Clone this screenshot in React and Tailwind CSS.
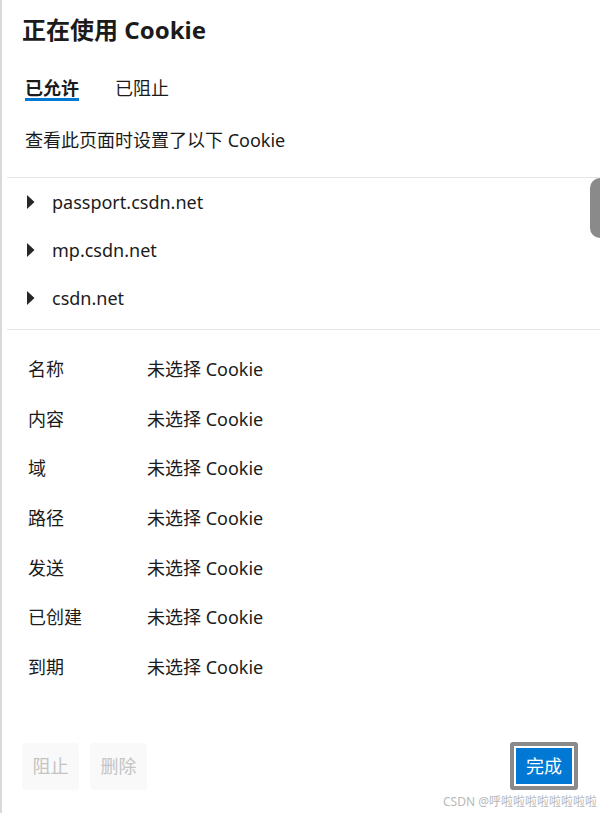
import React from 'react';

const domains = ['passport.csdn.net', 'mp.csdn.net', 'csdn.net'];
const fields = ['名称', '内容', '域', '路径', '发送', '已创建', '到期'];

export default function App() {
  return (
    <div
      className="flex w-[600px] h-[813px] bg-[#e6e6e6] overflow-hidden text-[#1b1b1b]"
      style={{ fontFamily: '"Segoe UI", "Noto Sans", "Noto Sans CJK SC", sans-serif' }}
    >
      <div className="w-[2px] shrink-0 bg-[#d9d9d9]" />
      <div className="relative flex flex-1 flex-col bg-white">
        <h1 className="pl-[20px] pt-[14px] text-[24px] font-bold leading-[32px]">正在使用 Cookie</h1>

        <div className="flex gap-[36px] pl-[23px] pt-[32px]">
          <div className="flex flex-col">
            <span className="text-[18px] font-bold leading-[20px]">已允许</span>
            <span className="mt-[0px] h-[3px] w-[54px] bg-[#0078d4]" />
          </div>
          <span className="text-[18px] leading-[20px]">已阻止</span>
        </div>

        <p className="pl-[23px] pt-[27px] text-[18px] leading-[24px]">查看此页面时设置了以下 Cookie</p>

        <div className="relative ml-[5px] mt-[25px] border-y border-[#e5e5e5] pb-[7px]">
          {domains.map((d) => (
            <div key={d} className="flex h-[48px] items-center">
              <svg width="8" height="14" viewBox="0 0 8 14" className="ml-[20px] mr-[17px]">
                <path d="M0 0 L7.5 7 L0 14 Z" fill="#262626" />
              </svg>
              <span className="text-[18px]">{d}</span>
            </div>
          ))}
          <div className="absolute right-0 top-0 h-[60px] w-[10px] rounded-l-full bg-[#8a8a8a]" />
        </div>

        <div className="flex flex-col pt-[15px]">
          {fields.map((f) => (
            <div key={f} className="flex h-[49.6px] items-center text-[18px]">
              <span className="w-[145px] pl-[26px]">{f}</span>
              <span>未选择 Cookie</span>
            </div>
          ))}
        </div>

        <div className="mt-auto mb-[23px] flex items-center px-[20px]">
          <button className="h-[47px] w-[57px] rounded-[3px] bg-[#f9f9f9] text-[18px] text-[#c4c4c4]">阻止</button>
          <button className="ml-[11px] h-[47px] w-[57px] rounded-[3px] bg-[#f9f9f9] text-[18px] text-[#c4c4c4]">删除</button>
          <div className="ml-auto mr-[2px] rounded-[3px] border-[4px] border-[#8a8a8a] p-[2px]">
            <button className="block h-[36px] w-[56px] bg-[#0078d4] text-[18px] text-white">完成</button>
          </div>
        </div>

        <span className="absolute bottom-[4px] right-[3px] text-[12px] leading-[14px] text-[#b8b8b8]">
          CSDN @呼啦啦啦啦啦啦啦啦
        </span>
      </div>
    </div>
  );
}
